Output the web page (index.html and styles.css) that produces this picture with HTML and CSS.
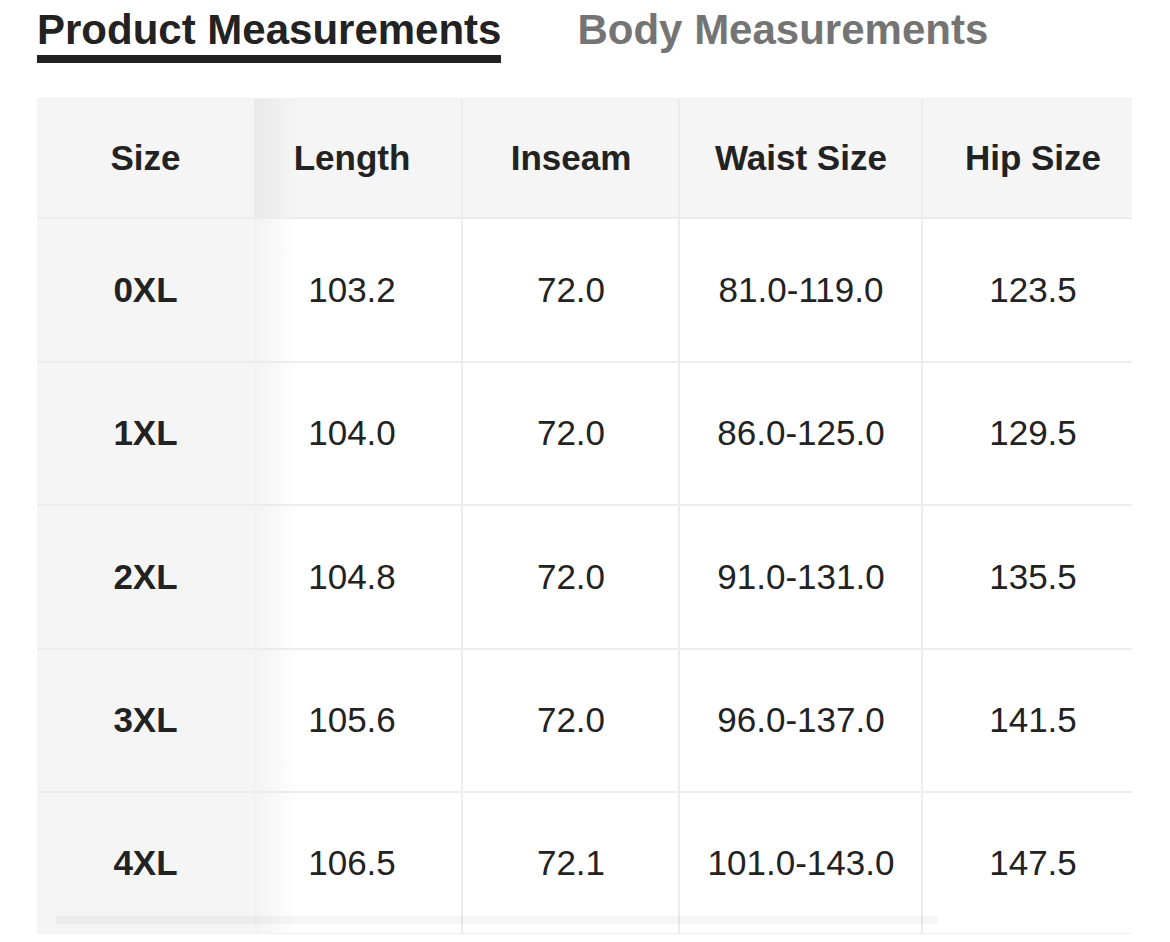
FILE: index.html
```html
<!DOCTYPE html>
<html lang="en">
<head>
<meta charset="utf-8">
<title>Size Chart</title>
<link rel="stylesheet" href="styles.css">
</head>
<body>
<div class="tabs">
  <div class="tab active">Product Measurements</div>
  <div class="tab">Body Measurements</div>
</div>
<div class="table-wrap">
  <div class="table">
    <div class="row head">
      <div class="cell">Size</div>
      <div class="cell">Length</div>
      <div class="cell">Inseam</div>
      <div class="cell">Waist Size</div>
      <div class="cell">Hip Size</div>
    </div>
    <div class="row">
      <div class="cell">0XL</div>
      <div class="cell">103.2</div>
      <div class="cell">72.0</div>
      <div class="cell">81.0-119.0</div>
      <div class="cell">123.5</div>
    </div>
    <div class="row">
      <div class="cell">1XL</div>
      <div class="cell">104.0</div>
      <div class="cell">72.0</div>
      <div class="cell">86.0-125.0</div>
      <div class="cell">129.5</div>
    </div>
    <div class="row">
      <div class="cell">2XL</div>
      <div class="cell">104.8</div>
      <div class="cell">72.0</div>
      <div class="cell">91.0-131.0</div>
      <div class="cell">135.5</div>
    </div>
    <div class="row">
      <div class="cell">3XL</div>
      <div class="cell">105.6</div>
      <div class="cell">72.0</div>
      <div class="cell">96.0-137.0</div>
      <div class="cell">141.5</div>
    </div>
    <div class="row last">
      <div class="cell">4XL</div>
      <div class="cell">106.5</div>
      <div class="cell">72.1</div>
      <div class="cell">101.0-143.0</div>
      <div class="cell">147.5</div>
    </div>
  </div>
  <div class="scrollbar"></div>
</div>
</body>
</html>
```

FILE: styles.css
```css
* { box-sizing: border-box; }
html, body { margin: 0; padding: 0; background: #fff; }
body {
  font-family: "Liberation Sans", Arial, Helvetica, sans-serif;
  color: #222;
  width: 1170px;
  height: 942px;
  overflow: hidden;
}
.tabs {
  display: flex;
  gap: 76px;
  padding: 6px 0 0 37px;
  height: 98px;
}
.tab {
  font-size: 42px;
  line-height: 48px;
  font-weight: bold;
  color: #747474;
  height: 57px;
  white-space: nowrap;
}
.tab.active {
  color: #222;
  border-bottom: 8px solid #222;
  padding-bottom: 1px;
}
.table-wrap {
  position: relative;
  margin-left: 37px;
  width: 1095px;
}
.table {
  display: flex;
  flex-direction: column;
  border-top: 1px solid #efefef;
}
.row {
  display: grid;
  grid-template-columns: 217px 208px 217px 243px 210px;
  height: 143.5px;
  border-bottom: 2px solid #ececec;
  font-size: 35px;
}
.row.head {
  height: 120px;
  background: #f5f5f5;
  font-weight: bold;
}
.row.last {
  height: 141px;
  border-bottom: 1px solid #f0f0f0;
}
.cell {
  display: flex;
  align-items: center;
  justify-content: center;
  white-space: nowrap;
}
.cell:nth-child(1) {
  background: #f5f5f5;
  font-weight: bold;
}
.cell:nth-child(2) {
  padding-right: 12px;
  background-image: linear-gradient(90deg, rgba(0, 0, 0, 0.05), rgba(0, 0, 0, 0) 44px);
}
.cell:nth-child(n+3) {
  border-left: 2px solid #ececec;
  margin-left: -1px;
}
.cell:nth-child(5) {
  padding-left: 11px;
}
.scrollbar {
  position: absolute;
  left: 18px;
  bottom: 10px;
  width: 883px;
  height: 8px;
  border-radius: 4px;
  background: rgba(0, 0, 0, 0.035);
}
```
